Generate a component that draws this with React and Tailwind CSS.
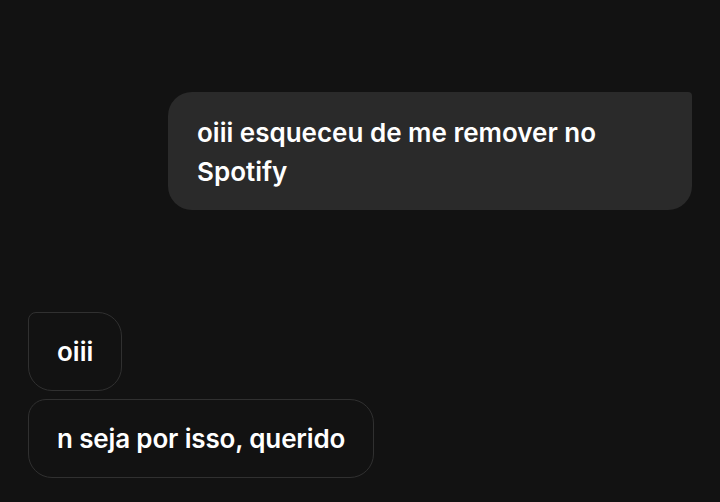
export default function App() {
  return (
    <div
      className="w-[720px] h-[502px] bg-[#121212] overflow-hidden flex flex-col"
      style={{ fontFamily: "Inter, 'Noto Sans', sans-serif" }}
    >
      <div className="flex justify-end pt-[92px] pr-[28px]">
        <div className="w-[524px] bg-[#2a2a2a] rounded-[24px] rounded-tr-[4px] px-[29px] pt-[21px] pb-[19px] text-white text-[26px] leading-[39px] font-semibold">
          oiii esqueceu de me remover no Spotify
        </div>
      </div>
      <div className="flex flex-col items-start gap-[8px] pl-[28px] mt-[102px]">
        <div className="h-[79px] flex items-center border-[1.5px] border-[#303030] rounded-[24px] rounded-tl-[8px] px-[28px] text-white text-[26px] font-semibold">
          oiii
        </div>
        <div className="h-[79px] flex items-center border-[1.5px] border-[#303030] rounded-[24px] rounded-tl-[18px] px-[28px] text-white text-[26px] font-semibold tracking-[-0.15px]">
          n seja por isso, querido
        </div>
      </div>
    </div>
  );
}
